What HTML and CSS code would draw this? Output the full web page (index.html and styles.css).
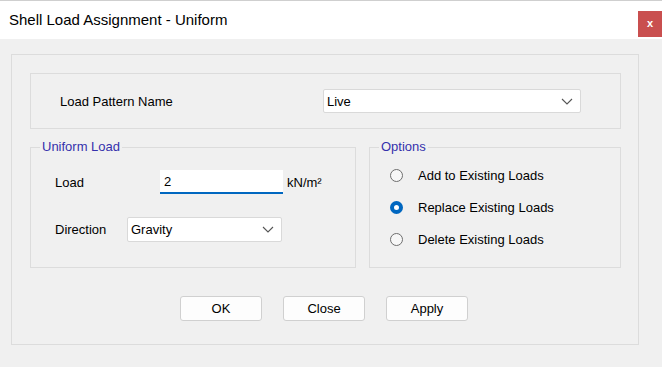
FILE: index.html
```html
<!DOCTYPE html>
<html lang="en">
<head>
  <meta charset="UTF-8" />
  <title>Shell Load Assignment - Uniform</title>
  <link rel="stylesheet" href="styles.css">
</head>
<body>
  <div class="window">
    <!-- Titelleiste -->
    <div class="titlebar">
      <span class="title">Shell Load Assignment - Uniform</span>
      <span class="close">x</span>
    </div>

    <div class="client">
      <div class="frame">
        <!-- Load Pattern -->
        <div class="pattern-box">
          <span class="pattern-label">Load Pattern Name</span>
          <div class="combo combo-pattern">
            <span>Live</span>
            <svg class="chev" width="12" height="7" viewBox="0 0 12 7"><path d="M1 1 L6 6 L11 1" fill="none" stroke="#555" stroke-width="1.1"/></svg>
          </div>
        </div>

        <div class="groups">
          <!-- Uniform Load -->
          <div class="group uniform">
            <span class="legend">Uniform Load</span>
            <div class="row row-load">
              <span class="lbl lbl-load">Load</span>
              <div class="textfield">2</div>
              <span class="unit">kN/m²</span>
            </div>
            <div class="row row-dir">
              <span class="lbl lbl-dir">Direction</span>
              <div class="combo combo-dir">
                <span>Gravity</span>
                <svg class="chev" width="12" height="7" viewBox="0 0 12 7"><path d="M1 1 L6 6 L11 1" fill="none" stroke="#555" stroke-width="1.1"/></svg>
              </div>
            </div>
          </div>

          <!-- Options -->
          <div class="group options">
            <span class="legend">Options</span>
            <div class="radio-list">
              <div class="radio-row"><span class="radio"></span><span>Add to Existing Loads</span></div>
              <div class="radio-row"><span class="radio checked"></span><span>Replace Existing Loads</span></div>
              <div class="radio-row"><span class="radio"></span><span>Delete Existing Loads</span></div>
            </div>
          </div>
        </div>

        <div class="buttons">
          <div class="btn">OK</div>
          <div class="btn">Close</div>
          <div class="btn">Apply</div>
        </div>
      </div>
    </div>
  </div>
</body>
</html>
```

FILE: styles.css
```css
body {
  margin: 0;
  font-family: "Liberation Sans", Arial, sans-serif;
  font-size: 13px;
  color: #000;
  background: #f0f0f0;
}

.window {
  width: 662px;
  height: 367px;
  background: #f0f0f0;
  border-top: 1px solid #cfcfcf;
  box-sizing: border-box;
}

/* Titelleiste */
.titlebar {
  height: 38px;
  background: #fff;
  display: flex;
  align-items: flex-start;
}
.title {
  font-size: 15px;
  line-height: 20px;
  margin: 9px 0 0 9px;
}
.close {
  margin: 10px 0 0 auto;
  width: 24px;
  height: 26px;
  background: #c94f4f;
  color: #fff;
  font-weight: bold;
  font-size: 11px;
  line-height: 25px;
  text-align: center;
}

.client { padding: 15px 23px 0 11px; }

.frame {
  width: 628px;
  height: 291px;
  box-sizing: border-box;
  border: 1px solid #dcdcdc;
  padding: 18px 17px 0 18px;
}

.pattern-box {
  height: 56px;
  box-sizing: border-box;
  border: 1px solid #dcdcdc;
  display: flex;
  align-items: center;
  padding-left: 29px;
}
.pattern-label { width: 263px; }

.combo {
  background: #fff;
  border: 1px solid #d9d9d9;
  border-radius: 2px;
  box-sizing: border-box;
  display: flex;
  align-items: center;
  justify-content: space-between;
  padding: 0 7px 0 3px;
}
.combo-pattern { width: 258px; height: 24px; }
.combo-dir { width: 155px; height: 25px; }
.chev { display: block; }

.groups {
  display: flex;
  gap: 13px;
  margin-top: 18px;
}
.group {
  height: 121px;
  box-sizing: border-box;
  border: 1px solid #dcdcdc;
}
.uniform { width: 326px; }
.options { width: 252px; }

.legend {
  display: block;
  width: fit-content;
  margin: -9px 0 0 9px;
  padding: 0 2px;
  line-height: 16px;
  background: #f0f0f0;
  color: #3530ac;
}

.row {
  display: flex;
  align-items: center;
  padding-left: 24px;
}
.row-load { margin-top: 15px; }
.row-dir { margin-top: 23px; }
.lbl-load { width: 105px; }
.lbl-dir { width: 72px; }

.textfield {
  width: 123px;
  height: 24px;
  box-sizing: border-box;
  background: #fff;
  border-bottom: 2px solid #0067c0;
  padding: 3px 0 0 4px;
  line-height: 18px;
}
.unit { margin-left: 4px; }

.radio-list {
  display: flex;
  flex-direction: column;
  gap: 12px;
  margin-top: 10px;
  padding-left: 20px;
}
.radio-row {
  display: flex;
  align-items: center;
  height: 20px;
}
.radio {
  width: 13px;
  height: 13px;
  box-sizing: border-box;
  border: 1.5px solid #6e6e6e;
  border-radius: 50%;
  background: #f7f7f7;
  margin-right: 15px;
}
.radio.checked {
  border: 4px solid #0067c0;
  background: #fff;
}

.buttons {
  display: flex;
  gap: 21px;
  margin-top: 28px;
  padding-left: 150px;
}
.btn {
  width: 82px;
  height: 25px;
  box-sizing: border-box;
  background: #fdfdfd;
  border: 1px solid #d0d0d0;
  border-radius: 3px;
  text-align: center;
  line-height: 23px;
}
```
